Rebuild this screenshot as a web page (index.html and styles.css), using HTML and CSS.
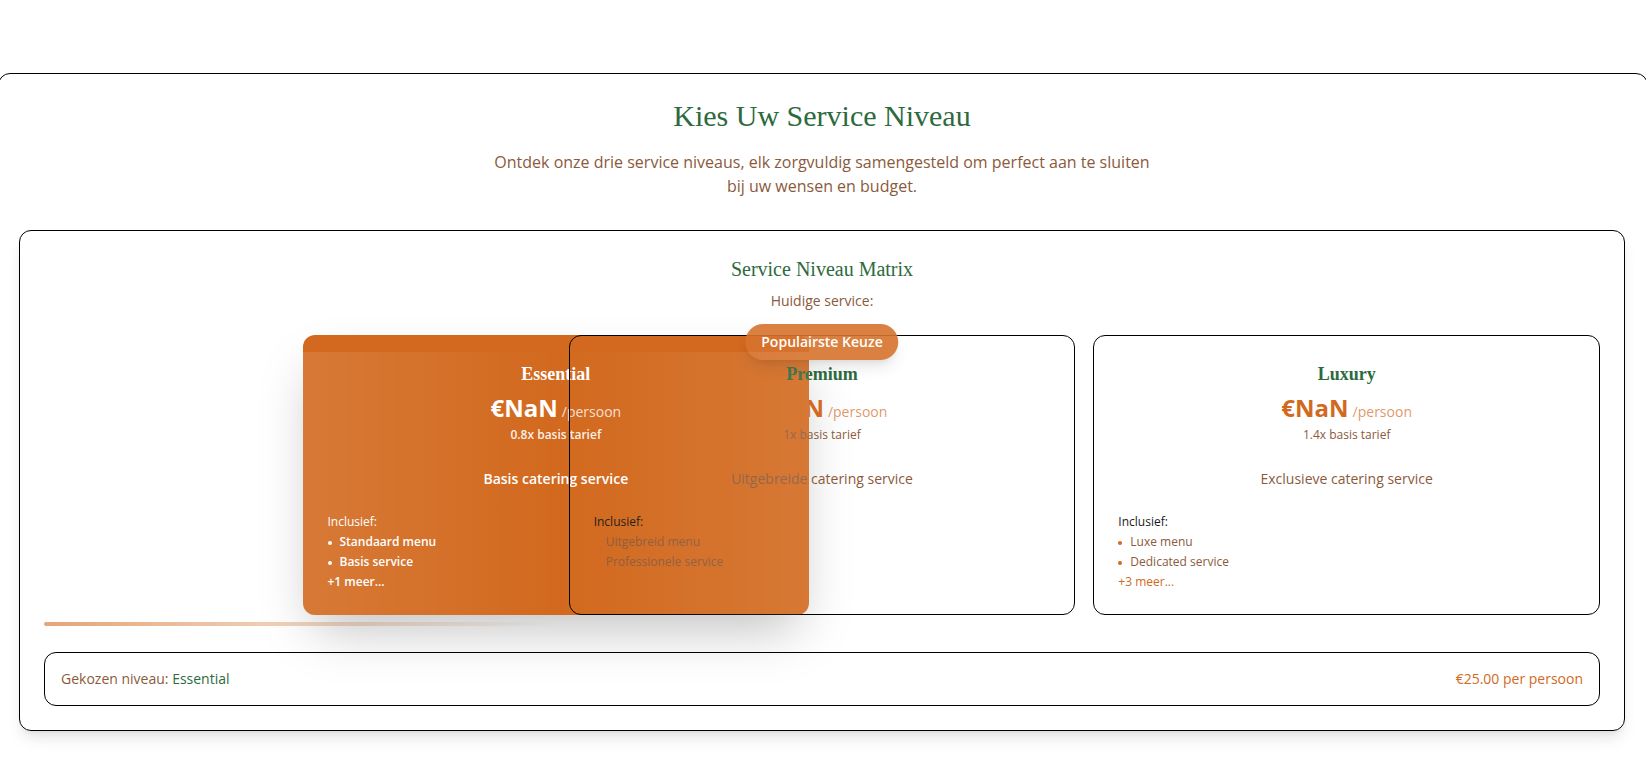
FILE: index.html
```html
<!DOCTYPE html>
<html lang="nl">
<head>
<meta charset="utf-8">
<title>Kies Uw Service Niveau</title>
<link rel="stylesheet" href="styles.css">
</head>
<body>
<main class="page">
  <section class="tiers">
    <header class="tiers-head">
      <h2 class="tiers-title">Kies Uw Service Niveau</h2>
      <p class="tiers-sub">Ontdek onze drie service niveaus, elk zorgvuldig samengesteld om perfect aan te sluiten bij uw wensen en budget.</p>
    </header>

    <div class="matrix">
      <h3 class="matrix-title">Service Niveau Matrix</h3>
      <p class="matrix-current">Huidige service:</p>

      <div class="tier-grid">
        <article class="tier tier--selected">
          <h4 class="tier-name">Essential</h4>
          <div class="tier-price"><span class="tier-amount">€NaN</span><span class="tier-unit">/persoon</span></div>
          <p class="tier-rate">0.8x basis tarief</p>
          <p class="tier-desc">Basis catering service</p>
          <p class="tier-label">Inclusief:</p>
          <ul class="tier-list">
            <li><span class="tier-dot"></span>Standaard menu</li>
            <li><span class="tier-dot"></span>Basis service</li>
            <li class="tier-more">+1 meer...</li>
          </ul>
        </article>

        <article class="tier tier--popular">
          <span class="tier-badge">Populairste Keuze</span>
          <h4 class="tier-name">Premium</h4>
          <div class="tier-price"><span class="tier-amount">€NaN</span><span class="tier-unit">/persoon</span></div>
          <p class="tier-rate">1x basis tarief</p>
          <p class="tier-desc">Uitgebreide catering service</p>
          <p class="tier-label">Inclusief:</p>
          <ul class="tier-list">
            <li><span class="tier-dot"></span>Uitgebreid menu</li>
            <li><span class="tier-dot"></span>Professionele service</li>
            <li class="tier-more">+2 meer...</li>
          </ul>
        </article>

        <article class="tier">
          <h4 class="tier-name">Luxury</h4>
          <div class="tier-price"><span class="tier-amount">€NaN</span><span class="tier-unit">/persoon</span></div>
          <p class="tier-rate">1.4x basis tarief</p>
          <p class="tier-desc">Exclusieve catering service</p>
          <p class="tier-label">Inclusief:</p>
          <ul class="tier-list">
            <li><span class="tier-dot"></span>Luxe menu</li>
            <li><span class="tier-dot"></span>Dedicated service</li>
            <li class="tier-more">+3 meer...</li>
          </ul>
        </article>
      </div>

      <div class="tier-indicator"><span class="tier-indicator-bar"></span></div>

      <div class="chosen">
        <span class="chosen-label">Gekozen niveau: <span class="chosen-name">Essential</span></span>
        <span class="chosen-price">€25.00 per persoon</span>
      </div>
    </div>
  </section>
</main>
</body>
</html>
```

FILE: styles.css
```css
html, body {
  margin: 0;
  padding: 0;
  background: #ffffff;
  overflow: hidden;
}

body {
  font-family: "Open Sans", "Liberation Sans", sans-serif;
  color: #1a1a1a;
}

.page {
  padding-top: 73px;
}

.tiers {
  box-sizing: border-box;
  width: 1650px;
  margin-left: -2px;
  border: 1px solid #000;
  border-radius: 12px;
  padding: 24px 22px 48px 20px;
}

.tiers-head {
  text-align: center;
  margin-bottom: 32px;
}

.tiers-title {
  margin: 0 0 16px;
  font-family: "Liberation Serif", "Times New Roman", serif;
  font-weight: 400;
  font-size: 30px;
  line-height: 36px;
  color: #2d6a3e;
}

.tiers-sub {
  max-width: 672px;
  margin: 0 auto;
  font-size: 16px;
  line-height: 24px;
  color: #8b5a3c;
}

.matrix {
  border: 1px solid #000;
  border-radius: 12px;
  padding: 24px;
  box-shadow: 0 10px 15px -3px rgba(0, 0, 0, 0.1), 0 4px 6px -4px rgba(0, 0, 0, 0.1);
}

.matrix-title {
  margin: 0 0 8px;
  text-align: center;
  font-family: "Liberation Serif", "Times New Roman", serif;
  font-weight: 400;
  font-size: 20px;
  line-height: 28px;
  color: #2d6a3e;
}

.matrix-current {
  margin: 0 0 24px;
  text-align: center;
  font-size: 14px;
  line-height: 20px;
  color: #8b5a3c;
}

.tier-grid {
  display: grid;
  grid-template-columns: repeat(3, 1fr);
  gap: 18px;
}

.tier {
  position: relative;
  z-index: 1;
  border: 1px solid #000;
  border-radius: 12px;
  padding: 24px;
  background: transparent;
}

.tier-name {
  margin: 0 0 4px;
  text-align: center;
  font-family: "Liberation Serif", "Times New Roman", serif;
  font-weight: 700;
  font-size: 18px;
  line-height: 28px;
  color: #2d6a3e;
}

.tier-price {
  height: 32px;
  margin-bottom: 3px;
  text-align: center;
  font-size: 24px;
  line-height: 32px;
}

.tier-amount {
  font-size: 24px;
  line-height: 32px;
  font-weight: 700;
  color: #d2691e;
}

.tier-unit {
  margin-left: 4px;
  font-size: 14px;
  line-height: 1;
  color: rgba(210, 105, 30, 0.7);
}

.tier-rate {
  margin: 0 0 26px;
  text-align: center;
  font-size: 12px;
  line-height: 16px;
  color: #8b5a3c;
}

.tier-desc {
  margin: 0 0 25px;
  text-align: center;
  font-size: 14px;
  line-height: 20px;
  color: #8b5a3c;
}

.tier-label {
  margin: 0 0 4px;
  font-size: 12px;
  line-height: 16px;
  font-weight: 500;
  color: #1a1a1a;
}

.tier-list {
  list-style: none;
  margin: 0;
  padding: 0;
  display: flex;
  flex-direction: column;
  gap: 4px;
  font-size: 12px;
  line-height: 16px;
  color: #8b5a3c;
}

.tier-list li {
  display: flex;
  align-items: center;
  height: 16px;
}

.tier-dot {
  flex: none;
  width: 4px;
  height: 4px;
  margin: 1px 8px 0 0;
  border-radius: 50%;
  background: #d2691e;
}

.tier-more {
  color: #d2691e;
}

/* selected (Essential) card, caught mid-slide; its sheen layer sits above the Premium card */
.tier--selected {
  z-index: auto;
  left: 258.5px;
  background: #d2691e;
  border-color: transparent;
  box-shadow: 0 25px 50px -12px rgba(0, 0, 0, 0.25);
}

.tier--selected::before {
  content: "";
  position: absolute;
  z-index: 2;
  top: 16px;
  left: -1px;
  right: -1px;
  bottom: -1px;
  border-radius: 0 0 12px 12px;
  pointer-events: none;
  background: linear-gradient(90deg, rgba(255, 255, 255, 0.11), rgba(255, 255, 255, 0) 50%, rgba(255, 255, 255, 0.1));
}

.tier--selected .tier-name,
.tier--selected .tier-amount,
.tier--selected .tier-label,
.tier--selected .tier-more {
  color: #ffffff;
}

.tier--selected .tier-dot {
  background: #ffffff;
}

.tier--selected .tier-unit {
  color: rgba(255, 255, 255, 0.8);
}

.tier--selected .tier-rate {
  color: rgba(255, 255, 255, 0.92);
  font-weight: 600;
}

.tier--selected .tier-desc {
  color: #ffffff;
  font-weight: 600;
}

.tier--selected .tier-list {
  color: #ffffff;
  font-weight: 600;
}

.tier--selected .tier-label {
  font-weight: 500;
}

.tier-badge {
  position: absolute;
  z-index: 2;
  top: -12px;
  left: 50%;
  transform: translateX(-50%);
  padding: 8px 16px;
  border-radius: 9999px;
  background: rgba(214, 115, 45, 0.9);
  color: #ffffff;
  font-size: 14px;
  line-height: 20px;
  font-weight: 600;
  white-space: nowrap;
  box-shadow: 0 10px 15px -3px rgba(0, 0, 0, 0.1), 0 4px 6px -4px rgba(0, 0, 0, 0.1);
}

.tier-indicator {
  margin-top: 7px;
  height: 4px;
}

.tier-indicator-bar {
  display: block;
  width: calc((100% - 36px) / 3);
  height: 4px;
  border-radius: 2px;
  background: linear-gradient(90deg, rgba(210, 105, 30, 0.6), rgba(210, 105, 30, 0));
}

.chosen {
  margin-top: 26px;
  border: 1px solid #000;
  border-radius: 12px;
  padding: 16px;
  display: flex;
  justify-content: space-between;
  align-items: center;
  font-size: 14px;
  line-height: 20px;
}

.chosen-label {
  color: #8b5a3c;
}

.chosen-name {
  color: #2d6a3e;
}

.chosen-price {
  color: #d2691e;
}
```
